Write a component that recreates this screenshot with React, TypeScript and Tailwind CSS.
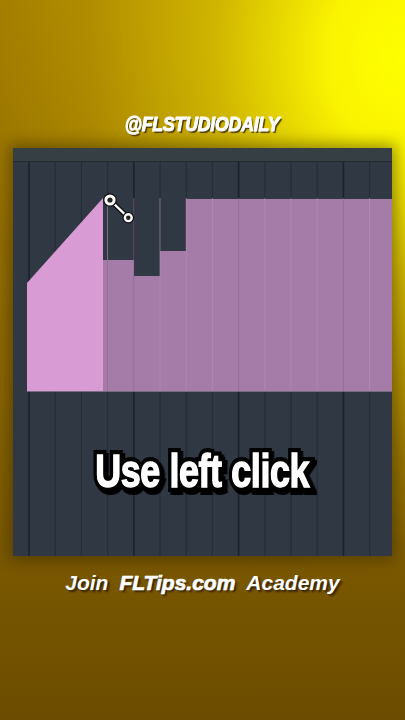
import React from "react";

const lineXs = Array.from({ length: 14 }, (_, i) => 16 + i * 26.2);

function Automation() {
  return (
    <svg viewBox="0 0 379 394" width="379" height="394" className="block">
      <rect x="0" y="0" width="379" height="394" fill="#303844" />
      {lineXs.map((x, i) => (
        <line
          key={i}
          x1={x}
          y1={0}
          x2={x}
          y2={394}
          stroke={i % 4 === 0 ? "#1c222b" : "#262d37"}
          strokeWidth={i % 4 === 0 ? 1.6 : 1.2}
        />
      ))}
      {/* darker automation area */}
      <path
        d="M90 229 L90 98 L121 98 L121 114 L147 114 L147 89 L173 89 L173 37 L379 37 L379 229 Z"
        fill="#a57ba8"
      />
      {/* light ramp segment */}
      <path d="M14 229 L14 121 L90 36 L90 229 Z" fill="#d99bd4" />
      {/* grid lines over pink */}
      {lineXs.map((x, i) =>
        x > 92 ? (
          <line
            key={"p" + i}
            x1={x}
            y1={36}
            x2={x}
            y2={229}
            stroke={i % 4 === 0 ? "#8e6a92" : "#b58cb8"}
            strokeWidth={1}
            opacity={0.7}
          />
        ) : null
      )}
      <line x1="94.5" y1="98" x2="94.5" y2="229" stroke="#976f9b" strokeWidth="1" />
      <line x1="14" y1="229.5" x2="379" y2="229.5" stroke="#c7a6c9" strokeWidth="0.8" opacity="0.6" />
      {/* control handle */}
      <line x1="97" y1="38" x2="115.3" y2="55.7" stroke="#111" strokeWidth="5" strokeLinecap="round" />
      <line x1="97" y1="38" x2="115.3" y2="55.7" stroke="#fff" strokeWidth="2.4" strokeLinecap="round" />
      <circle cx="97" cy="38" r="6.8" fill="#111" />
      <circle cx="97" cy="38" r="5.6" fill="#fff" />
      <circle cx="97" cy="38" r="2.6" fill="#222" />
      <circle cx="115.3" cy="55.7" r="5.8" fill="#111" />
      <circle cx="115.3" cy="55.7" r="4.6" fill="#fff" />
      <circle cx="115.3" cy="55.7" r="2.2" fill="#222" />
    </svg>
  );
}

export default function App() {
  return (
    <div className="relative w-[405px] h-[720px] overflow-hidden bg-[radial-gradient(ellipse_105%_72%_at_100%_8%,rgba(255,255,0,1)_0%,rgba(255,250,0,0.95)_18%,rgba(240,220,0,0.6)_45%,rgba(220,190,0,0.25)_75%,rgba(200,170,0,0)_100%),linear-gradient(to_bottom,#a27c00_0%,#8c6800_50%,#6c4c00_100%)] flex flex-col items-center font-['Liberation_Sans',Arial,sans-serif]">
      <div className="mt-[110px] h-[26px] flex items-center justify-center">
        <span className="inline-block scale-x-[0.84] text-[21px] leading-none font-bold italic text-white tracking-[-0.2px] [-webkit-text-stroke:1.1px_#fff] [text-shadow:2px_2px_1px_rgba(50,35,0,0.8)]">
          @FLSTUDIODAILY
        </span>
      </div>

      <div className="relative mt-[12px] w-[379px] flex flex-col shadow-[0_0_14px_4px_rgba(40,28,0,0.45)]">
        <div className="h-[14px] bg-[#363f44] border-b border-[#232a30]" />
        <Automation />
        <div className="absolute left-0 right-0 top-[300px] flex justify-center">
          <div className="relative scale-x-[0.78] text-[46px] leading-none font-bold tracking-[-0.5px]">
            <span className="block text-white [-webkit-text-stroke:10px_#000] [paint-order:stroke_fill] drop-shadow-[3px_3px_0_#000]">
              Use left click
            </span>
            <span className="absolute inset-0 block text-white [-webkit-text-stroke:1.4px_#fff]">
              Use left click
            </span>
          </div>
        </div>
      </div>

      <div className="mt-[16px] flex items-baseline gap-[11px] text-white italic font-bold text-[21px] leading-none [text-shadow:2px_2px_2px_rgba(40,25,0,0.85)]">
        <span>Join</span>
        <span className="[-webkit-text-stroke:0.7px_#fff]">FLTips.com</span>
        <span>Academy</span>
      </div>
    </div>
  );
}
